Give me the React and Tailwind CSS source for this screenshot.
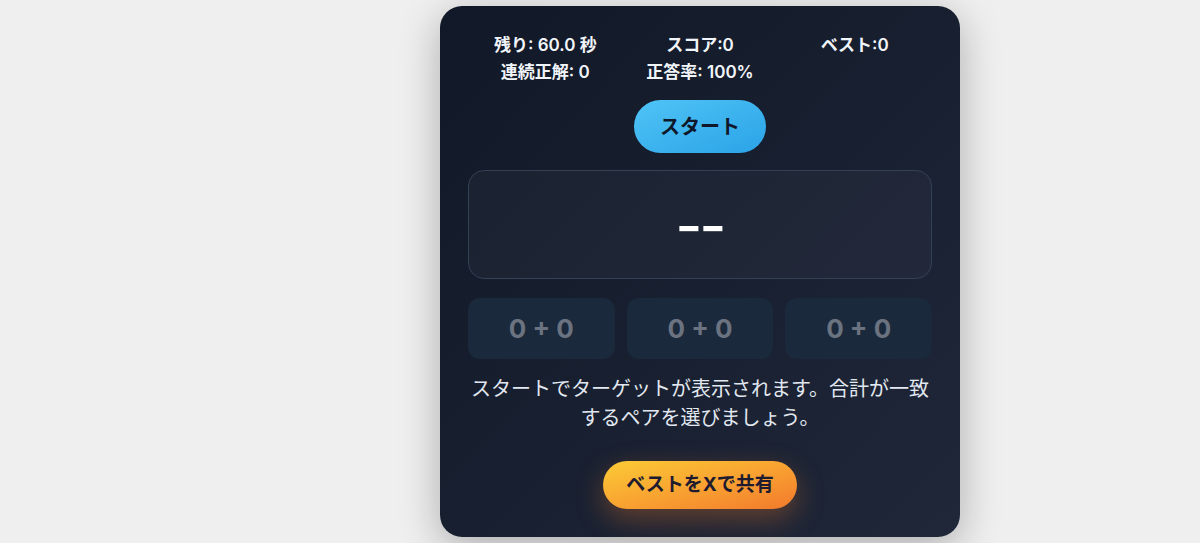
export default function App() {
  const font = { fontFamily: '"Inter", "Noto Sans CJK JP", sans-serif' };
  return (
    <div className="w-[1200px] h-[543px] bg-[#efefef] flex items-center pl-[440px]" style={font}>
      <div className="w-[520px] h-[531px] rounded-[22px] bg-gradient-to-br from-[#111827] to-[#1f2739] shadow-[0_10px_40px_rgba(0,0,0,0.28)] px-7 pt-[27px] flex flex-col items-center">
        <div className="w-full grid grid-cols-3 gap-y-[3px] text-[17px] font-semibold text-[#f1f5f9] text-center">
          <div className="leading-6">残り: 60.0 秒</div>
          <div className="leading-6">スコア:0</div>
          <div className="leading-6">ベスト:0</div>
          <div className="leading-6">連続正解: 0</div>
          <div className="leading-6">正答率: 100%</div>
          <div className="leading-6"></div>
        </div>
        <button className="mt-4 w-[132px] h-[53px] rounded-full bg-gradient-to-br from-[#4fc4f7] to-[#2aa3e6] text-[#0f172a] text-[20px] font-semibold">
          スタート
        </button>
        <div className="mt-[17px] w-full h-[109px] rounded-2xl border border-[#334155] bg-white/[0.03] flex items-center justify-center">
          <span className="inline-block text-white text-[44px] font-bold leading-none tracking-[-2px] scale-x-[1.3] translate-y-[1px]">--</span>
        </div>
        <div className="mt-[19px] w-full grid grid-cols-3 gap-3">
          {[0, 1, 2].map((i) => (
            <div key={i} className="h-[61px] rounded-xl bg-[#1b293c] flex items-center justify-center text-[#6b7280] text-[26px] font-bold">
              0 + 0
            </div>
          ))}
        </div>
        <p className="mt-[16px] text-center text-[20px] leading-[29px] text-[#e2e8f0]">
          スタートでターゲットが表示されます。合計が一致するペアを選びましょう。
        </p>
        <button className="mt-[28px] w-[194px] h-[48px] rounded-full bg-gradient-to-br from-[#fbcb36] to-[#f2792c] text-[#1e1b2e] text-[19px] font-bold shadow-[0_10px_28px_rgba(234,120,40,0.35)]">
          ベストをXで共有
        </button>
      </div>
    </div>
  );
}
